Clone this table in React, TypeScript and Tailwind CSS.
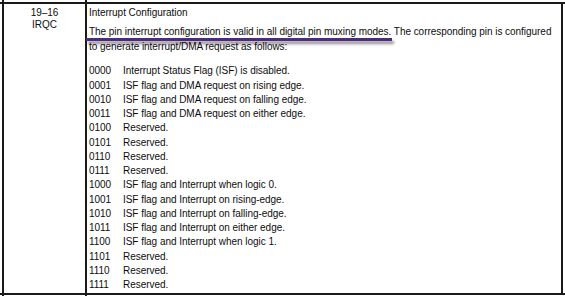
import React from "react";

const rows: [string, string][] = [
  ["0000", "Interrupt Status Flag (ISF) is disabled."],
  ["0001", "ISF flag and DMA request on rising edge."],
  ["0010", "ISF flag and DMA request on falling edge."],
  ["0011", "ISF flag and DMA request on either edge."],
  ["0100", "Reserved."],
  ["0101", "Reserved."],
  ["0110", "Reserved."],
  ["0111", "Reserved."],
  ["1000", "ISF flag and Interrupt when logic 0."],
  ["1001", "ISF flag and Interrupt on rising-edge."],
  ["1010", "ISF flag and Interrupt on falling-edge."],
  ["1011", "ISF flag and Interrupt on either edge."],
  ["1100", "ISF flag and Interrupt when logic 1."],
  ["1101", "Reserved."],
  ["1110", "Reserved."],
  ["1111", "Reserved."],
];

function Stub({ className }: { className: string }) {
  return (
    <div className={"flex pl-[2px] pr-[2px] " + className}>
      <div className="w-[83px] border-l-2 border-[#1a1a1a]" />
      <div className="flex-1 border-l-2 border-[#1a1a1a]" />
    </div>
  );
}

export default function App() {
  return (
    <div className="w-[565px] h-[296px] bg-white overflow-hidden flex flex-col font-['Liberation_Sans',Arial,sans-serif] text-[10px] tracking-[-0.04px] text-[#0d0d0d]">
      <Stub className="h-[2px]" />
      <div className="flex pl-[2px] pr-[2px] border-y-2 border-[#1a1a1a]">
        <div className="w-[83px] border-l-2 border-[#1a1a1a] flex flex-col items-center pt-[3px] leading-[11.5px]">
          <div>19–16</div>
          <div>IRQC</div>
        </div>
        <div className="flex-1 border-l-2 border-r-2 border-[#1a1a1a] pl-[2px] pt-[2px] leading-[14.27px]">
          <div>Interrupt Configuration</div>
          <div className="mt-[5px]">
            <span className="relative">
              The pin interrupt configuration is valid in all digital pin muxing modes.
              <span className="absolute left-[-3px] right-[-1px] top-[12px] h-[2.5px] bg-[#4e2a7e] shadow-[2px_3px_3px_rgba(0,0,0,0.45)]" />
            </span>{" "}
            The corresponding pin is configured to generate interrupt/DMA request as follows:
          </div>
          <div className="mt-[10.5px] flex flex-col">
            {rows.map(([c, d]) => (
              <div key={c} className="flex">
                <div className="w-[34px]">{c}</div>
                <div>{d}</div>
              </div>
            ))}
          </div>
        </div>
      </div>
      <Stub className="flex-1" />
    </div>
  );
}
